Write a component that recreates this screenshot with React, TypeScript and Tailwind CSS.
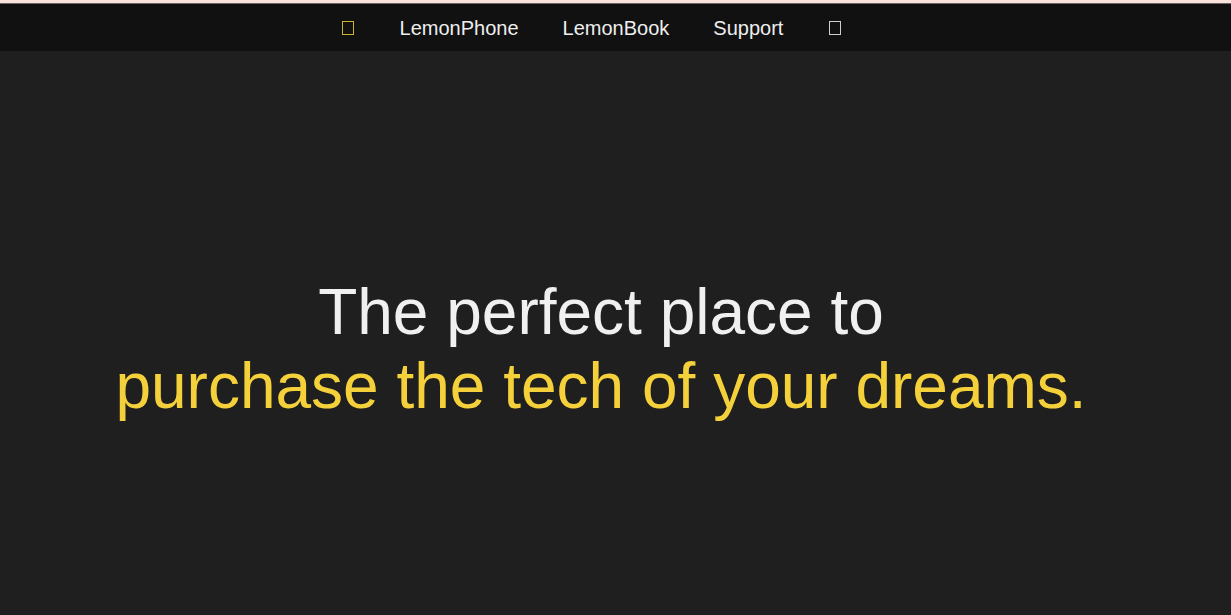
import React from 'react';

const navLinks = ['LemonPhone', 'LemonBook', 'Support'];

// font icons that failed to load show up as empty glyph boxes
const GlyphBox = ({ className }: { className: string }) => (
  <span className={`inline-block w-[12px] h-[14px] border ${className}`} />
);

const App: React.FC = () => {
  return (
    <div className="min-h-[615px] flex flex-col bg-[#1f1f1f] font-['Liberation_Sans',Arial,sans-serif]">
      <div className="h-[3px] bg-[#fbe4dd]" />
      <div className="h-[1px] bg-[#6b6563]" />
      <nav className="h-[47px] bg-[#111111] flex items-center justify-center pr-[48px]">
        <ul className="flex items-center gap-[44px] text-[20px] text-[#eeeeee]">
          <li className="flex items-center pt-[1px] mr-[2px]">
            <GlyphBox className="border-[#c9b52e]" />
          </li>
          {navLinks.map((link) => (
            <li key={link}>
              <a href="#" className="leading-none">
                {link}
              </a>
            </li>
          ))}
          <li className="flex items-center pt-[1px] ml-[2px]">
            <GlyphBox className="border-[#d0d0d0]" />
          </li>
        </ul>
      </nav>
      <main className="flex-1 flex justify-center pt-[225px] pr-[29px]">
        <h1 className="text-[64px] leading-[1.15] font-normal text-center">
          <span className="block text-[#f0f0f0]">The perfect place to</span>
          <span className="block text-[#f4d13a]">purchase the tech of your dreams.</span>
        </h1>
      </main>
    </div>
  );
};

export default App;
